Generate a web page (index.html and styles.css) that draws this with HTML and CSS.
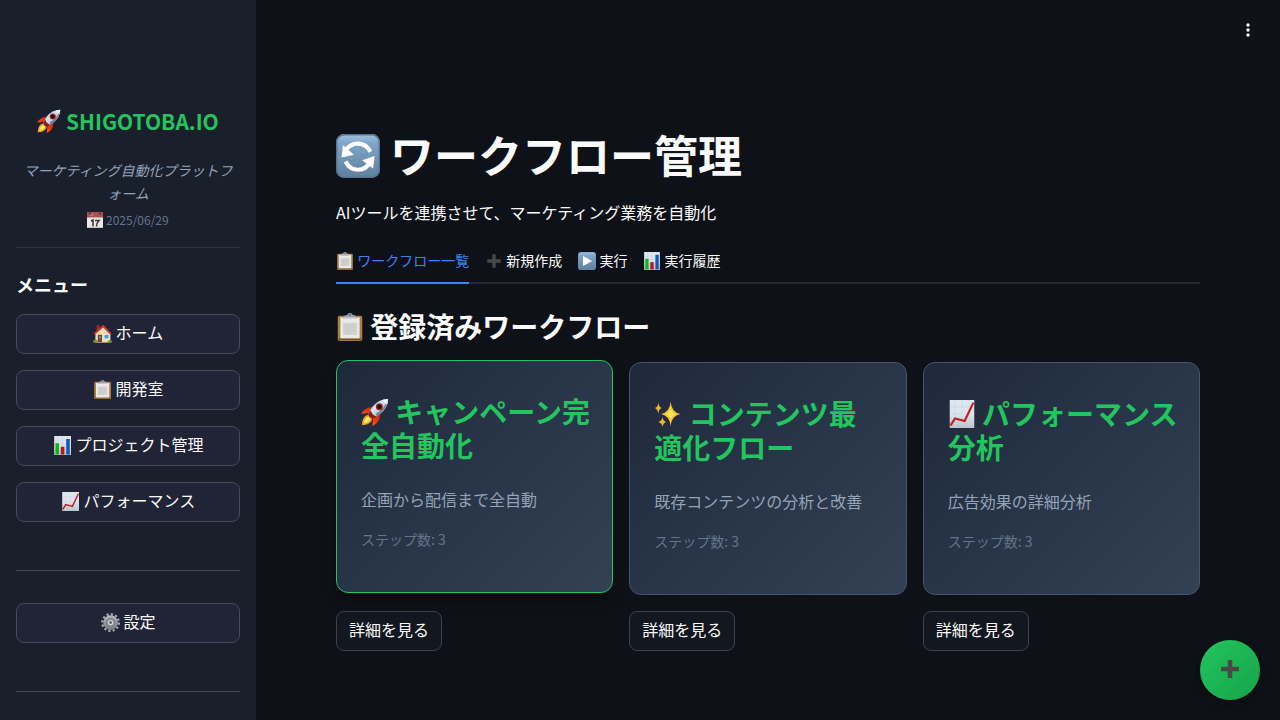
FILE: index.html
```html
<!DOCTYPE html>
<html lang="ja">
<head>
<meta charset="utf-8">
<meta name="viewport" content="width=device-width, initial-scale=1">
<title>ワークフロー管理</title>
<link rel="stylesheet" href="styles.css">
</head>
<body>
<svg class="sprite" aria-hidden="true">
  <defs>
    <linearGradient id="g-tile" x1="0" y1="0" x2="0" y2="1"><stop offset="0" stop-color="#a3c3dc"/><stop offset=".2" stop-color="#7fa5c9"/><stop offset="1" stop-color="#5f7f9d"/></linearGradient>
    <linearGradient id="g-paper" x1="0" y1="0" x2="0" y2="1"><stop offset="0" stop-color="#dfe8f0"/><stop offset=".55" stop-color="#dbe3ea"/><stop offset="1" stop-color="#b9c2c9"/></linearGradient>
    <linearGradient id="g-body" x1="0" y1="0" x2="1" y2="1"><stop offset="0" stop-color="#4a90cf"/><stop offset=".4" stop-color="#d6e6f2"/><stop offset="1" stop-color="#7d8c9b"/></linearGradient>
    <linearGradient id="g-flame" x1="1" y1="0" x2="0" y2="1"><stop offset="0" stop-color="#b81408"/><stop offset=".5" stop-color="#f0380c"/><stop offset="1" stop-color="#ffc928"/></linearGradient>
    <linearGradient id="g-gear" x1="0" y1="0" x2="0" y2="1"><stop offset="0" stop-color="#b4b8bc"/><stop offset="1" stop-color="#7d8286"/></linearGradient>
    <symbol id="i-rocket" viewBox="0 0 32 32">
      <path d="M14 10 8 11Q3 13 0 18L9 17zM22 18 21 24Q19 29 13 32L14 22z" fill="url(#g-flame)"/>
      <path d="M8 19Q1 21 1 31Q11 31 13 24z" fill="#ff9d18"/><path d="M8 21Q4 23 3 29Q9 28 11 24z" fill="#fff06a"/>
      <path d="M31 1Q20 1 13 10L8 18Q8 22 14 24L22 18Q31 11 31 1z" fill="url(#g-body)"/>
      <path d="M8 18 11 14Q13 20 18 21L14 24Q9 23 8 18z" fill="#8b1c19"/>
      <path d="M31 1Q30 9 24 16L18 21 17 18Q27 12 31 1z" fill="#75818e"/>
      <path d="M31 1 25 2Q26 6 30 7z" fill="#eef5fa"/>
      <circle cx="21" cy="10" r="4" fill="#b31c1c"/><circle cx="21" cy="10" r="2.5" fill="#17151c"/>
    </symbol>
    <symbol id="i-calendar" viewBox="0 0 32 32">
      <path d="M0 0h32v32H0z" fill="#e8e8e6"/><path d="M0 0h32v11H0z" fill="#a9504f"/><path d="M0 11h32v1.500H0z" fill="#c9bcbb"/>
      <path d="M6 3v5M9 3v5M12 3v5" stroke="#c98986" stroke-width="1.500"/><circle cx="6" cy="3" r="2" fill="#3f3334"/><circle cx="26" cy="3" r="2" fill="#3f3334"/>
      <path d="m8 18 4-2v13M16 17h8q-5 5-5 12" fill="none" stroke="#363636" stroke-width="3"/><path d="M0 30h32v2H0z" fill="#c5c5c2"/>
    </symbol>
    <symbol id="i-house" viewBox="0 0 32 32">
      <path d="M6 2h5v9H6z" fill="#a02c20"/><path d="M4 14 17 4l12 11v15H4z" fill="#f1dcb4"/>
      <path d="M1 16 16 2q1-1 2 0l13 14-2 2L17 6 3 18z" fill="#c9382a"/>
      <path d="M8 18h7v12H8z" fill="#74452b"/><path d="M10 20h3v4h-3z" fill="#5d93b5"/>
      <path d="M18 17h9v8h-9z" fill="#fff"/><path d="M19 18h7v6h-7z" fill="#4c9bd6"/>
      <path d="M0 31q0-5 4-5t4 5zM24 31q0-4 4-4t4 4z" fill="#5c9a2b"/><path d="M3 30h26v2H3z" fill="#9b8a66"/>
    </symbol>
    <symbol id="i-clipboard" viewBox="0 0 32 32">
      <rect x="2" y="3" width="28" height="29" rx="2" fill="#aa7f43"/><path d="M3 29h26v2H3z" fill="#76501f"/>
      <path d="M5 5h22v24H5z" fill="#e9e9e8"/><path d="M8 11h16v14H8z" fill="#d3d3d3"/>
      <path d="M10 14h12M10 17h12M10 20h12M10 23h8" stroke="#c4c5c6"/>
      <path d="M8 6q0-3 5-4 0-2 3-2t3 2q5 1 5 4z" fill="#959ba1"/><path d="M9 5h14" stroke="#c8cdd2"/><circle cx="16" cy="2" r="1" fill="#596068"/>
    </symbol>
    <symbol id="i-bars" viewBox="0 0 32 32">
      <path d="M2 0h28v32H2z" fill="url(#g-paper)"/><path d="M2 7h28M2 14h28M2 21h28M8 0v32M16 0v32M24 0v32" stroke="#c3d0da" stroke-width=".7"/>
      <path d="M4 12h6v19H4z" fill="#0cb819"/><path d="M13 18h6v13h-6z" fill="#bd1220"/><path d="M22 5h6v26h-6z" fill="#1259bd"/>
    </symbol>
    <symbol id="i-trend" viewBox="0 0 32 32">
      <path d="M2 0h28v32H2z" fill="url(#g-paper)"/><path d="M2 8h28M2 16h28M2 24h28M8 0v32M16 0v32M24 0v32" stroke="#cbd6df" stroke-width=".7"/>
      <path d="m3 29 5-8 11 3L29 3" fill="none" stroke="#c91920" stroke-width="2.400"/>
    </symbol>
    <symbol id="i-gear" viewBox="0 0 32 32">
      <circle cx="16" cy="16" r="13.800" fill="none" stroke="#a5a9ad" stroke-width="4" stroke-dasharray="3.600 3.625"/>
      <circle cx="16" cy="16" r="10" fill="#8b9095" stroke="url(#g-gear)" stroke-width="4.500"/>
      <circle cx="16" cy="16" r="7.500" fill="none" stroke="#686d72" stroke-width="1"/>
      <circle cx="16" cy="16" r="3.500" fill="#5b6166" stroke="#d4d8dc" stroke-width="2"/>
    </symbol>
    <symbol id="i-refresh" viewBox="0 0 32 32">
      <rect width="32" height="32" rx="6" fill="url(#g-tile)"/><rect x=".5" y=".5" width="31" height="31" rx="5.500" fill="none" stroke="#547390"/>
      <g fill="none" stroke="#fff" stroke-width="3"><path d="M7 12q3-5 9-5 6 0 9 6"/><path d="M25 20q-3 6-9 6-6 0-9-6"/></g>
      <path d="M4 17 5 8l8 7zM28 16l-1 9-8-6z" fill="#fff"/>
    </symbol>
    <symbol id="i-play" viewBox="0 0 32 32">
      <rect width="32" height="32" rx="6" fill="url(#g-tile)"/><rect x=".5" y=".5" width="31" height="31" rx="5.500" fill="none" stroke="#6c91b0"/><path d="m9 7 16 9-16 9z" fill="#fff"/>
    </symbol>
    <symbol id="i-plus" viewBox="0 0 32 32"><path d="M13 4h6v9h9v6h-9v9h-6v-9H4v-6h9z" fill="#484848"/></symbol>
    <symbol id="i-sparkles" viewBox="0 0 32 32">
      <path d="M19 2q1 12 11 14-10 2-11 14-1-12-11-14 10-2 11-14z" fill="#f8c52f"/><path d="M19 9q1 6 6 7-5 1-6 7-1-6-6-7 5-1 6-7z" fill="#ffe45b"/>
      <path d="M5 2q0 6 4 7-4 1-4 7-1-6-4-7 4-1 4-7zM10 19q0 5 4 6-4 1-4 6-1-5-5-6 4-1 5-6z" fill="#f3b42c"/>
    </symbol>
  </defs>
</svg>

<div class="app">
  <aside class="sidebar">
    <div class="brand">
      <h2 class="brand-name"><svg class="emoji" aria-hidden="true"><use href="#i-rocket"/></svg> SHIGOTOBA.IO</h2>
      <p class="tagline">マーケティング自動化プラットフォーム</p>
      <p class="date"><svg class="emoji emoji-wide" aria-hidden="true"><use href="#i-calendar"/></svg> 2025/06/29</p>
    </div>
    <nav class="menu" aria-labelledby="menu-title">
      <h3 class="menu-title" id="menu-title">メニュー</h3>
      <button class="button" type="button"><svg class="emoji emoji-wide" aria-hidden="true"><use href="#i-house"/></svg> ホーム</button>
      <button class="button" type="button"><svg class="emoji emoji-wide" aria-hidden="true"><use href="#i-clipboard"/></svg> 開発室</button>
      <button class="button" type="button"><svg class="emoji emoji-wide" aria-hidden="true"><use href="#i-bars"/></svg> プロジェクト管理</button>
      <button class="button" type="button"><svg class="emoji emoji-wide" aria-hidden="true"><use href="#i-trend"/></svg> パフォーマンス</button>
    </nav>
    <div class="settings">
      <button class="button" type="button"><svg class="emoji emoji-wide" aria-hidden="true"><use href="#i-gear"/></svg> 設定</button>
    </div>
  </aside>

  <div class="page">
    <header class="toolbar">
      <button class="more" type="button" aria-label="メニューを開く"><svg viewBox="0 0 16 16" aria-hidden="true"><circle cx="8" cy="3" r="1.700"/><circle cx="8" cy="8" r="1.700"/><circle cx="8" cy="13" r="1.700"/></svg></button>
    </header>
    <main class="content">
      <h1 class="title"><svg class="emoji" aria-hidden="true"><use href="#i-refresh"/></svg> ワークフロー管理</h1>
      <p class="lead">AIツールを連携させて、マーケティング業務を自動化</p>
      <div class="tabs" role="tablist">
        <button class="tab tab-active" type="button" role="tab" aria-selected="true"><svg class="emoji emoji-wide" aria-hidden="true"><use href="#i-clipboard"/></svg> ワークフロー一覧</button>
        <button class="tab" type="button" role="tab" aria-selected="false"><svg class="emoji emoji-wide" aria-hidden="true"><use href="#i-plus"/></svg> 新規作成</button>
        <button class="tab" type="button" role="tab" aria-selected="false"><svg class="emoji emoji-wide" aria-hidden="true"><use href="#i-play"/></svg> 実行</button>
        <button class="tab" type="button" role="tab" aria-selected="false"><svg class="emoji emoji-wide" aria-hidden="true"><use href="#i-bars"/></svg> 実行履歴</button>
      </div>
      <h2 class="section-title"><svg class="emoji" aria-hidden="true"><use href="#i-clipboard"/></svg> 登録済みワークフロー</h2>
      <div class="workflows">
        <section class="workflow">
          <article class="card card-raised">
            <h3 class="card-title"><svg class="emoji" aria-hidden="true"><use href="#i-rocket"/></svg> キャンペーン完<wbr>全自動化</h3>
            <p class="card-text">企画から配信まで全自動</p>
            <p class="card-steps">ステップ数: 3</p>
          </article>
          <button class="button button-small" type="button">詳細を見る</button>
        </section>
        <section class="workflow">
          <article class="card">
            <h3 class="card-title"><svg class="emoji" aria-hidden="true"><use href="#i-sparkles"/></svg> コンテンツ最<wbr>適化フロー</h3>
            <p class="card-text">既存コンテンツの分析と改善</p>
            <p class="card-steps">ステップ数: 3</p>
          </article>
          <button class="button button-small" type="button">詳細を見る</button>
        </section>
        <section class="workflow">
          <article class="card">
            <h3 class="card-title"><svg class="emoji" aria-hidden="true"><use href="#i-trend"/></svg> パフォーマンス<wbr>分析</h3>
            <p class="card-text">広告効果の詳細分析</p>
            <p class="card-steps">ステップ数: 3</p>
          </article>
          <button class="button button-small" type="button">詳細を見る</button>
        </section>
      </div>
    </main>
  </div>
</div>
<button class="fab" type="button" aria-label="新規作成"><svg class="emoji" aria-hidden="true"><use href="#i-plus"/></svg></button>
</body>
</html>
```

FILE: styles.css
```css
* { box-sizing: border-box; }

body {
  margin: 0;
  background: #0e1117;
  color: #fafafa;
  font-family: "Noto Sans CJK JP", sans-serif;
  font-size: 16px;
  line-height: 24px;
}

h1, h2, h3, p { margin: 0; }

button {
  font: inherit;
  color: inherit;
  cursor: pointer;
}

.sprite {
  position: absolute;
  width: 0;
  height: 0;
}

.emoji {
  width: 1em;
  height: 1em;
  vertical-align: -0.12em;
}

.emoji-wide {
  width: 1.2em;
  height: 1.2em;
  vertical-align: -0.25em;
}

.app {
  display: flex;
  min-height: 100vh;
}

/* Sidebar */
.sidebar {
  flex: 0 0 256px;
  padding: 103px 16px 0;
  background: #1a1f2c;
}

.brand {
  padding-bottom: 17px;
  border-bottom: 1px solid #2b303c;
  text-align: center;
}

.brand-name {
  color: #22c55e;
  font-size: 21px;
  line-height: 36px;
}

.brand-name .emoji {
  width: 24px;
  height: 24px;
}

.tagline {
  margin-top: 20px;
  padding: 0 4px;
  color: #94a3b8;
  font-size: 14px;
  font-style: italic;
  line-height: 23px;
}

.date {
  margin-top: 4px;
  color: #64748b;
  font-size: 12px;
  line-height: 21px;
}

.date .emoji {
  width: 16px;
  height: 16px;
}

.menu {
  display: flex;
  flex-direction: column;
  gap: 16px;
  padding: 24px 0 48px;
}

.menu-title {
  margin-bottom: 2px;
  font-size: 18px;
  line-height: 24px;
}

.button {
  min-height: 40px;
  padding: 2px 12px 6px;
  border: 1px solid #474b59;
  border-radius: 8px;
  background: #202436;
}

.settings {
  display: flex;
  flex-direction: column;
  padding: 32px 0 48px;
  border: solid #474855;
  border-width: 1px 0;
}

/* Page */
.page {
  flex: 1;
  min-width: 0;
}

.toolbar {
  display: flex;
  justify-content: flex-end;
  padding: 16px 18px;
}

.more {
  display: flex;
  padding: 6px;
  border: 0;
  background: none;
}

.more svg {
  width: 16px;
  height: 16px;
  fill: #fafafa;
}

.content { padding: 67px 80px 64px; }

.title {
  font-size: 44px;
  line-height: 54px;
}

.lead { margin-top: 19px; }

.tabs {
  display: flex;
  gap: 16px;
  margin-top: 16px;
  box-shadow: inset 0 -2px #262a31;
}

.tab {
  height: 44px;
  padding: 0 0 2px;
  border: 0;
  border-bottom: 2px solid transparent;
  background: none;
  font-size: 14px;
}

.tab .emoji {
  width: 18px;
  height: 18px;
}

.tab-active {
  border-color: #3b82f6;
  color: #3b82f6;
}

.section-title {
  margin-top: 25px;
  font-size: 28px;
  line-height: 34px;
}

.workflows {
  display: grid;
  grid-template-columns: repeat(3, minmax(0, 1fr));
  gap: 16px;
  margin-top: 19px;
}

.workflow {
  display: flex;
  flex-direction: column;
  align-items: flex-start;
  gap: 16px;
}

.card {
  width: 100%;
  padding: 33px 20px 42px 24px;
  border: 1px solid #475569;
  border-radius: 12px;
  background: linear-gradient(135deg, #1e293b, #334155);
}

.card-raised {
  border-color: #22c55e;
  box-shadow: 0 8px 16px rgba(0, 0, 0, 0.3);
  transform: translateY(-2px);
}

.card-title {
  color: #22c55e;
  font-size: 28px;
  line-height: 34px;
  word-break: keep-all;
  overflow-wrap: break-word;
}

.card-text {
  margin-top: 25px;
  color: #94a3b8;
}

.card-steps {
  margin-top: 17px;
  color: #64748b;
  font-size: 14px;
  line-height: 22px;
}

.button-small {
  border-color: #3e4148;
  background: #13171f;
}

.fab {
  position: fixed;
  right: 20px;
  bottom: 20px;
  display: grid;
  place-items: center;
  width: 60px;
  height: 60px;
  padding: 0 0 2px;
  border: 0;
  border-radius: 50%;
  background: linear-gradient(135deg, #22c55e, #16a34a);
  box-shadow: 0 4px 12px rgba(0, 0, 0, 0.3);
  font-size: 24px;
}
```
